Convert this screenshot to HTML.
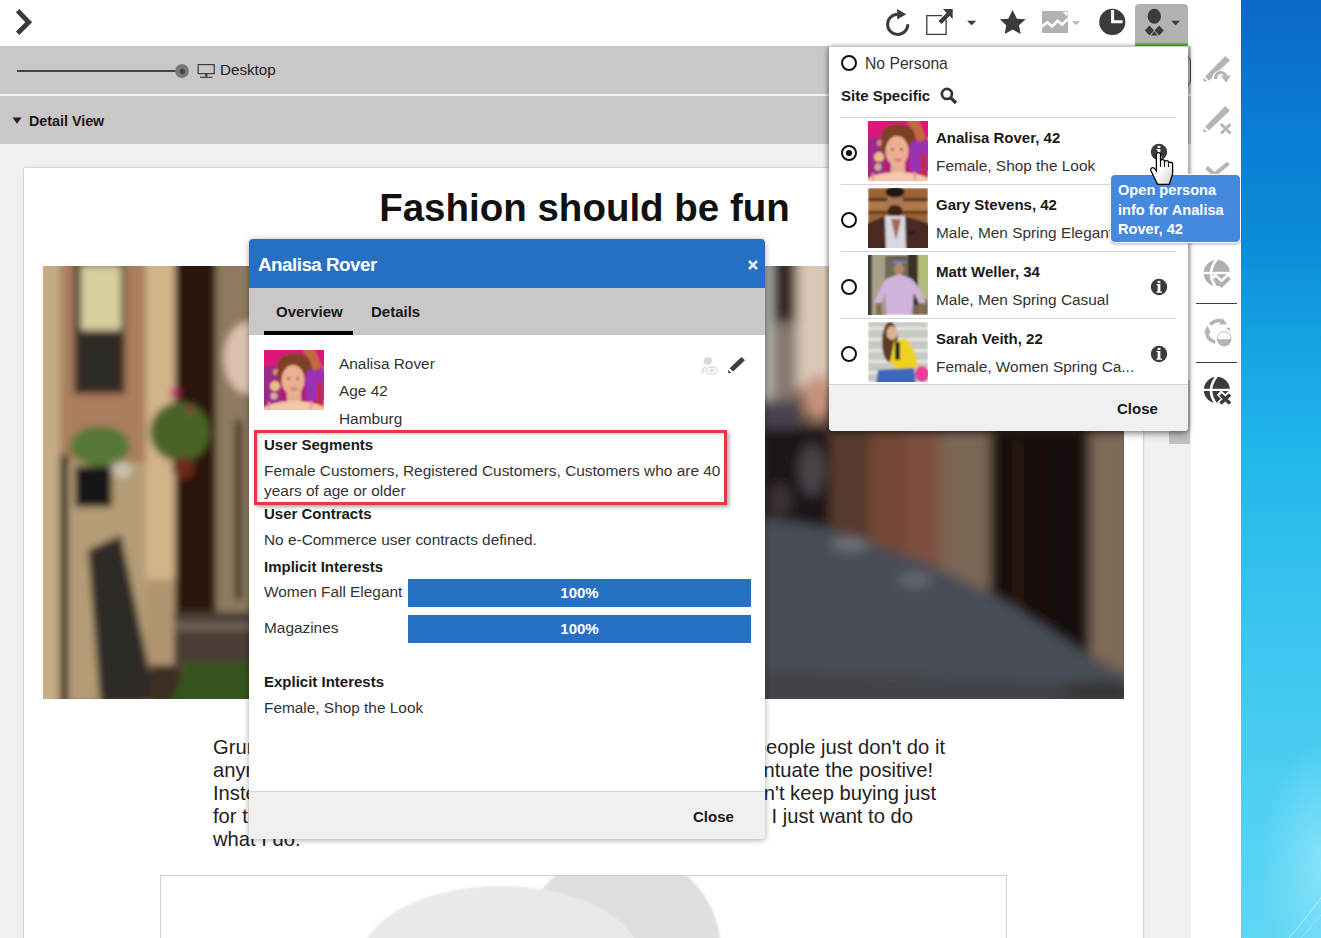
<!DOCTYPE html>
<html><head><meta charset="utf-8">
<style>
*{box-sizing:border-box;margin:0;padding:0}
html,body{width:1321px;height:938px;overflow:hidden;background:#fff;font-family:"Liberation Sans",sans-serif;color:#222}
.a{position:absolute}
#wall{left:1241px;top:0;width:80px;height:938px;background:radial-gradient(ellipse 60px 120px at 100% 92%,rgba(190,245,255,.45),rgba(190,245,255,0)),linear-gradient(180deg,#0b68c8 0%,#0a7cd2 13%,#0a8ad8 25%,#16a4e4 37%,#22b6ea 48%,#3cc6f0 68%,#55d2f4 90%,#60d6f5 100%)}
#topbar{left:0;top:0;width:1241px;height:46px;background:#fff}
#gbar1{left:0;top:46px;width:1191px;height:48px;background:#c9c7c8}
#gsep{left:0;top:94px;width:1191px;height:2px;background:#f4f4f4}
#gbar2{left:0;top:96px;width:1191px;height:48px;background:#c9c7c8}
#bg{left:0;top:144px;width:1191px;height:795px;background:#f0f0f0}
#side{left:1191px;top:46px;width:50px;height:892px;background:#fff}
#card{left:24px;top:168px;width:1119px;height:800px;background:#fff;box-shadow:0 0 2px rgba(0,0,0,.35)}
#title{left:25px;top:186px;width:1119px;text-align:center;font:bold 38.5px/44px "Liberation Sans",sans-serif;color:#111;padding-left:0}
#photo{left:43px;top:266px;width:1081px;height:433px;background:#6a5a4a;overflow:hidden}
.para{font:20.2px/23px "Liberation Sans",sans-serif;color:#222;white-space:nowrap}
#hatbox{left:160px;top:875px;width:847px;height:100px;border:1px solid #cfcfcf;background:#fff;overflow:hidden}
#thumb{left:1169px;top:380px;width:21px;height:64px;background:#c1c1c1}

#modal{left:249px;top:239px;width:516px;height:600px;background:#fff;border-radius:4px;box-shadow:0 1px 6px rgba(0,0,0,.35);overflow:hidden}
#mhead{left:0;top:0;width:516px;height:49px;background:#2670c4}
#mtitle{left:9px;top:15px;font:bold 18.8px/22px "Liberation Sans",sans-serif;letter-spacing:-0.5px;color:#fff}
#mtabs{left:0;top:49px;width:516px;height:47px;background:#c9c7c8}
.tab{font:bold 15px/18px "Liberation Sans",sans-serif;color:#1a1a1a}
#uline{left:15px;top:92px;width:89px;height:4px;background:#000}
.t15{font:15.4px/18px "Liberation Sans",sans-serif;color:#333;white-space:nowrap}
.b15{font:bold 15px/18px "Liberation Sans",sans-serif;color:#1a1a1a;white-space:nowrap}
#mfoot{left:0;top:552px;width:516px;height:48px;background:#f0f0f0;border-top:1px solid #d2d2d2}
.bar{background:#2670c4;color:#fff;font:bold 15px/28px "Liberation Sans",sans-serif;text-align:center}
#redbox{left:5px;top:191px;width:473px;height:75px;border:3px solid #e8393d;box-shadow:2px 2px 4px rgba(0,0,0,.35), inset 1px 1px 3px rgba(0,0,0,.25)}

#dd{left:829px;top:46px;width:359px;height:385px;background:#fff;border-top:1px solid #cfcfcf;border-radius:0 0 4px 4px;box-shadow:0 4px 6px rgba(0,0,0,.3), 2px 0 4px rgba(0,0,0,.2), -2px 0 4px rgba(0,0,0,.2);overflow:hidden}
.radio{width:16px;height:16px;border:2px solid #111;border-radius:50%}
.sep{height:1px;background:#d6d6d6;left:12px;width:335px}
.av{width:60px;height:60px}
.info{width:17px;height:17px;border-radius:50%;background:#3a3a3a}
#ddfoot{left:0;top:337px;width:359px;height:48px;background:#f0f0f0;border-top:1px solid #d4d4d4}
#tip{left:1110px;top:174px;width:131px;height:69px;background:#4489de;border:1px solid #fff;border-radius:5px;box-shadow:0 2px 2px rgba(0,0,0,.2);color:#fff;font:bold 14.6px/19.5px "Liberation Sans",sans-serif;padding:6px 0 0 7px;white-space:nowrap}
</style></head><body>
<svg width="0" height="0" style="position:absolute">
<defs>
 <filter id="bl" x="-5%" y="-5%" width="110%" height="110%"><feGaussianBlur stdDeviation="0.8"/></filter>
 <filter id="bl3" x="-2%" y="-5%" width="104%" height="110%"><feGaussianBlur stdDeviation="3.5"/></filter>
 <filter id="bl6" x="-5%" y="-5%" width="110%" height="110%"><feGaussianBlur stdDeviation="6"/></filter>
 <clipPath id="avc"><rect width="60" height="60"/></clipPath>
 <symbol id="av1" viewBox="0 0 60 60"><g clip-path="url(#avc)"><g filter="url(#bl)">
  <rect width="60" height="60" fill="#b01a7c"/>
  <rect x="-2" y="-2" width="64" height="18" fill="#de127a"/>
  <rect x="-2" y="16" width="18" height="46" fill="#9a2a86"/>
  <circle cx="11" cy="36" r="5" fill="#e8c088"/><circle cx="10" cy="46" r="3.5" fill="#d0b098"/><circle cx="12" cy="22" r="3" fill="#e09070"/>
  <rect x="42" y="20" width="20" height="30" fill="#9a30b4"/>
  <polygon points="38,-2 50,-2 58,18 50,21" fill="#c06a3c"/>
  <rect x="53" y="32" width="5" height="28" fill="#c42a30"/>
  <ellipse cx="30" cy="15" rx="17" ry="12" fill="#7c4028"/>
  <ellipse cx="18" cy="25" rx="5" ry="8" fill="#7c4028"/>
  <rect x="23" y="38" width="14" height="14" fill="#e6ae90"/>
  <ellipse cx="29" cy="30" rx="11.5" ry="15" fill="#eab090"/>
  <circle cx="24.5" cy="28.5" r="1.2" fill="#5a4a60"/><circle cx="33.5" cy="28.5" r="1.2" fill="#5a4a60"/>
  <ellipse cx="30" cy="39" rx="4" ry="1.8" fill="#e07a88"/>
  <ellipse cx="30" cy="63" rx="34" ry="12" fill="#f2c8a8"/>
  <rect x="4" y="52" width="2" height="9" fill="#f08aa8"/><rect x="46" y="51" width="2" height="9" fill="#f08aa8"/>
 </g></g></symbol>
 <symbol id="av2" viewBox="0 0 60 60"><g clip-path="url(#avc)"><g filter="url(#bl)">
  <rect width="60" height="60" fill="#9a6438"/>
  <rect y="10" width="60" height="3" fill="#5a3418"/><rect y="23" width="60" height="3" fill="#6a3c1c"/><rect y="36" width="60" height="2" fill="#6a3c1c"/>
  <rect y="14" width="60" height="8" fill="#b07a4a"/>
  <ellipse cx="27" cy="15" rx="8.5" ry="12.5" fill="#a87456"/>
  <ellipse cx="27" cy="4" rx="9.5" ry="5.5" fill="#24160e"/>
  <ellipse cx="27" cy="23" rx="7.5" ry="6" fill="#3a2418"/>
  <polygon points="-2,36 17,28 37,28 62,36 62,62 -2,62" fill="#4a2c24"/>
  <polygon points="17,28 37,28 38,62 18,62" fill="#dcd6de"/>
  <polygon points="23,31 33,31 28,52" fill="#a06a50"/>
  <polygon points="40,44 47,43 46,47 40,47" fill="#1a1a2a"/>
 </g></g></symbol>
 <symbol id="av3" viewBox="0 0 60 60"><g clip-path="url(#avc)"><g filter="url(#bl)">
  <rect width="60" height="60" fill="#6e6a52"/>
  <rect x="-2" y="-2" width="6" height="64" fill="#3e3a2e"/>
  <rect x="4" y="-2" width="13" height="64" fill="#a8a08a"/>
  <rect x="40" y="-2" width="10" height="52" fill="#3a3026"/>
  <rect x="50" y="-2" width="12" height="46" fill="#b4bc7c"/>
  <ellipse cx="31" cy="6" rx="8" ry="4.5" fill="#6a6048"/>
  <rect x="24" y="6" width="14" height="2.2" fill="#6888c8"/>
  <ellipse cx="31" cy="14" rx="5" ry="6.5" fill="#b08868"/>
  <polygon points="18,24 31,19 44,24 52,34 58,48 52,50 46,38 44,60 18,60 17,38 12,50 6,48 12,34" fill="#d0b4dc"/>
  <rect x="8" y="48" width="6" height="12" fill="#8a6a50"/><rect x="50" y="48" width="6" height="12" fill="#8a6a50"/>
 </g></g></symbol>
 <symbol id="av4" viewBox="0 0 60 60"><g clip-path="url(#avc)"><g filter="url(#bl)">
  <rect width="60" height="60" fill="#c8c8c4"/>
  <rect y="5" width="60" height="3" fill="#e6e6e2"/><rect y="16" width="60" height="3" fill="#e6e6e2"/><rect y="27" width="60" height="3" fill="#e6e6e2"/><rect y="38" width="60" height="3" fill="#e6e6e2"/><rect y="49" width="60" height="3" fill="#e6e6e2"/>
  <ellipse cx="22" cy="20" rx="8" ry="20" fill="#5a3a28"/>
  <ellipse cx="24" cy="11" rx="5.5" ry="7" fill="#e0b090"/>
  <polygon points="26,20 38,16 46,28 50,44 44,50 30,48 22,40" fill="#f0d020"/>
  <rect x="27" y="20" width="5" height="18" fill="#222"/>
  <polygon points="10,48 46,46 48,62 8,62" fill="#3a68b8"/>
  <ellipse cx="54" cy="52" rx="7" ry="8" fill="#e83c98"/>
 </g></g></symbol>
 <symbol id="infoi" viewBox="0 0 18 18"><circle cx="9" cy="9" r="8.2" fill="#3d3a3b"/><rect x="7.6" y="2.9" width="2.8" height="2" fill="#fff"/><path d="M6.5 5.9 H10.4 V13.5 H12 V14.8 H6.4 V13.5 H7.6 V7.1 H6.5 Z" fill="#fff"/></symbol>
</defs></svg>
<div class="a" id="wall"><svg width="80" height="938" style="position:absolute;left:0;top:0"><path d="M48 938 Q70 912 82 895" fill="none" stroke="rgba(255,255,255,.45)" stroke-width="1"/><path d="M60 938 Q75 922 82 912" fill="none" stroke="rgba(255,255,255,.25)" stroke-width="1"/></svg></div>
<div class="a" id="topbar"></div>
<div class="a" id="gbar1"></div>
<div class="a" id="gsep"></div>
<div class="a" style="left:1100px;top:56px;width:91px;height:30px;border:1.4px solid #444;border-radius:5px"></div>
<div class="a" id="gbar2"></div>
<div class="a" id="bg"></div>
<div class="a" id="thumb"></div>
<div class="a" id="side"></div>
<svg class="a" style="left:0;top:0" width="1241" height="46" viewBox="0 0 1241 46">
 <polygon points="15.9,12.2 19.3,9 32.1,22.2 19.3,35 15.9,31.6 25.3,22.2" fill="#3d3a3a"/>
 <path d="M907.8 24.2 A10.1 10.1 0 1 1 897.6 14.2" fill="none" stroke="#3d3a3a" stroke-width="3"/>
 <polygon points="897.1,9 906.2,14.2 897.1,19.4" fill="#3d3a3a"/>
 <path d="M942 15.6 H926.8 V34.3 H946.1 V19.5" fill="none" stroke="#3d3a3a" stroke-width="1.3"/>
 <path d="M940 22.5 L948.5 14" stroke="#3d3a3a" stroke-width="4.2"/>
 <polygon points="943,9 952.7,9 952.7,19" fill="#3d3a3a"/>
 <polygon points="967,20.8 976.3,20.8 971.6,25.3" fill="#3d3a3a"/>
 <polygon points="1012.6,10 1016.9,18.8 1025.6,19.3 1019,25.3 1020.7,34 1012.6,29.6 1004.8,34 1006.2,25.3 999.8,19.3 1008.3,18.8" fill="#3d3a3a"/>
 <rect x="1042" y="11" width="26" height="22" fill="#b1b1b1"/>
 <polyline points="1041,27 1047.5,22.5 1052,26.5 1057.5,20.8 1062,24.5 1069,18" fill="none" stroke="#fff" stroke-width="2.6"/>
 <polygon points="1062.3,11.8 1067.5,11.8 1067.5,16.5" fill="#fff"/>
 <polygon points="1072.1,21.2 1080.1,21.2 1076.1,25.1" fill="#b1b1b1"/>
 <circle cx="1112.3" cy="21.9" r="13.1" fill="#3d3a3a"/>
 <path d="M1112.6 9.9 V21.8 H1122.6" fill="none" stroke="#fff" stroke-width="3.1"/>
 <path d="M1135 43.5 V8 Q1135 4 1139 4 H1184 Q1188 4 1188 8 V43.5 Z" fill="#b3b1b2"/>
 <rect x="1135" y="43.3" width="53" height="2.7" fill="#5aae3c"/>
 <ellipse cx="1154.3" cy="16.3" rx="6.7" ry="7.5" fill="#3d3a3a"/>
 <polygon points="1144.8,30.6 1149.4,25.6 1154,30.6 1149.4,35.4" fill="#3d3a3a"/>
 <polygon points="1154.6,30.6 1159.2,25.6 1163.8,30.6 1159.2,35.4" fill="#3d3a3a"/>
 <polygon points="1151,35.6 1154.3,31.2 1157.6,35.6" fill="#3d3a3a"/>
 <polygon points="1171.1,20.8 1180.2,20.8 1175.6,25.3" fill="#3d3a3a"/>
</svg>
<svg class="a" style="left:0;top:46px" width="300" height="50" viewBox="0 46 300 50">
 <rect x="17" y="70" width="160" height="2" fill="#404548"/>
 <circle cx="182" cy="71" r="6.9" fill="#7a7776"/>
 <circle cx="182.4" cy="71.4" r="2.6" fill="#404548"/>
 <rect x="198.2" y="64.6" width="16" height="9" fill="none" stroke="#3a3f42" stroke-width="1.2"/>
 <rect x="205.2" y="73.8" width="2.2" height="3" fill="#3a3f42"/>
 <rect x="200" y="76.7" width="12.5" height="1.2" fill="#3a3f42"/>
</svg>
<div class="a t15" style="left:220px;top:61px;color:#222;font-size:15.2px">Desktop</div>
<svg class="a" style="left:12px;top:117px" width="10" height="7" viewBox="0 0 10 7"><polygon points="0.5,0.6 9.6,0.6 5,6.8" fill="#222"/></svg>
<div class="a" style="left:29px;top:113px;font:bold 14.3px/16px 'Liberation Sans',sans-serif;color:#1a1a1a">Detail View</div>
<svg class="a" style="left:1191px;top:46px" width="50" height="370" viewBox="1191 46 50 370">
 <g fill="#b5b5b5">
  <polygon points="1225.2,56 1230,60.2 1209,80.7 1205.1,76.4"/>
  <polygon points="1203.5,77.8 1203.5,81.6 1207.3,81.6"/>
  <polygon points="1225.2,106 1230,110.4 1209,130.5 1205.1,126.7"/>
  <polygon points="1203.5,128.1 1203.5,132 1207.3,132"/>
 </g>
 <path d="M1215.5 79.5 A5.6 5.6 0 0 1 1226 76.5" fill="none" stroke="#fff" stroke-width="7"/>
 <path d="M1215.7 79 A5.3 5.3 0 0 1 1226 76.5" fill="none" stroke="#b5b5b5" stroke-width="3.2"/>
 <polygon points="1220.8,75.5 1231.2,75.5 1226,82.6" fill="#b5b5b5"/>
 <path d="M1221 124 L1230.5 133.5 M1230.5 124 L1221 133.5" stroke="#fff" stroke-width="6"/>
 <path d="M1221 124 L1230.5 133.5 M1230.5 124 L1221 133.5" stroke="#b5b5b5" stroke-width="3"/>
 <polyline points="1206.5,167.5 1214.4,174.8 1228.5,163" fill="none" stroke="#b5b5b5" stroke-width="4.2"/>
 <circle cx="1216.8" cy="272.9" r="13.1" fill="#b0b0b0"/>
 <path d="M1203 273 H1231" stroke="#fff" stroke-width="2.4"/>
 <path d="M1217 259 Q1205.5 272.9 1216 287" fill="none" stroke="#fff" stroke-width="2.6"/>
 <polyline points="1213.5,275 1221.6,282.5 1230.5,274" fill="none" stroke="#fff" stroke-width="5"/>
 <polyline points="1214.5,278.5 1221.6,285.2 1229.5,277.5" fill="none" stroke="#b0b0b0" stroke-width="4"/>
 <rect x="1196" y="303" width="41" height="1" fill="#3c3c3c"/>
 <g fill="#b3b3b3">
  <path d="M1210.2 324.8 Q1214 320 1221 320.5" fill="none" stroke="#b3b3b3" stroke-width="3.4"/>
  <polygon points="1222.4,318 1227.3,324.6 1219.2,324.6"/>
  <path d="M1215.2 342.3 Q1207.5 340 1206.8 332.5" fill="none" stroke="#b3b3b3" stroke-width="3.4"/>
  <polygon points="1207.5,325.6 1203.9,333.3 1210.9,333.3"/>
  <polygon points="1225.9,327.8 1230.1,327.8 1230.1,331.2"/>
  <path d="M1217.1 339.3 H1231.3 A7.1 7.1 0 0 1 1217.1 339.3 Z"/>
 </g>
 <circle cx="1224.2" cy="338.4" r="6.8" fill="none" stroke="#b3b3b3" stroke-width="0.9"/>
 <rect x="1196" y="362" width="41" height="1" fill="#3c3c3c"/>
 <circle cx="1216.9" cy="389.9" r="13.1" fill="#3c3a3b"/>
 <path d="M1203 389.9 H1231" stroke="#fff" stroke-width="2.2"/>
 <path d="M1217 376 Q1205.5 389.9 1216 404" fill="none" stroke="#fff" stroke-width="2.6"/>
 <path d="M1219 392.5 L1231.5 405 M1231.5 392.5 L1219 405" stroke="#fff" stroke-width="6.5"/>
 <path d="M1220.5 394.5 L1230 403.5 M1230 394.5 L1220.5 403.5" stroke="#3c3a3b" stroke-width="3.6"/>
</svg>

<div class="a" id="card"></div>
<div class="a" id="title">Fashion should be fun</div>
<div class="a" id="photo"><svg width="1081" height="433" viewBox="43 266 1081 433"><g filter="url(#bl3)">
 <rect x="30" y="250" width="1110" height="460" fill="#5a4a3c"/>
 <!-- left strip -->
 <rect x="30" y="250" width="31" height="460" fill="#c4ac84"/>
 <rect x="60" y="250" width="86" height="215" fill="#aa7e5e"/>
 <rect x="60" y="455" width="8" height="250" fill="#1e1812"/>
 <rect x="68" y="462" width="84" height="240" fill="#b49c76"/>
 <rect x="74" y="262" width="51" height="132" fill="#3a2a20"/>
 <rect x="81" y="266" width="40" height="64" fill="#d8cfa0"/>
 <rect x="81" y="333" width="40" height="56" fill="#2e2926"/>
 <ellipse cx="100" cy="446" rx="30" ry="20" fill="#587834"/>
 <rect x="75" y="466" width="37" height="41" fill="#161412"/>
 <ellipse cx="122" cy="470" rx="10" ry="8" fill="#c8c0b0"/>
 <rect x="146" y="560" width="30" height="150" fill="#b09470"/>
 <polygon points="88,550 121,535 156,702 100,702" fill="#2e2a26"/>
 <rect x="146" y="250" width="30" height="330" fill="#d2b48a"/>
 <rect x="175" y="250" width="42" height="370" fill="#2a120c"/>
 <rect x="216" y="250" width="40" height="370" fill="#8e7a5e"/>
 <rect x="235" y="420" width="7" height="180" fill="#3a3026"/>
 <ellipse cx="232" cy="675" rx="0" ry="0" fill="none"/>
 <rect x="174" y="612" width="82" height="52" fill="#4a3c34"/>
 <rect x="174" y="622" width="82" height="9" fill="#6e6054"/>
 <ellipse cx="180" cy="432" rx="30" ry="30" fill="#4a6428"/>
 <circle cx="175" cy="393" r="5" fill="#b81a68"/>
 <circle cx="190" cy="410" r="3.5" fill="#9a2a40"/>
 <circle cx="183" cy="468" r="11" fill="#6e2a1a"/>
 <rect x="150" y="665" width="30" height="40" fill="#3a2e22"/>
 <polygon points="186,662 256,662 256,706 170,706" fill="#34521f"/>
 <ellipse cx="248" cy="358" rx="24" ry="36" fill="#dcc0b0"/>
 </g><g filter="url(#bl6)">
 <!-- right top strip -->
 <rect x="760" y="250" width="13" height="160" fill="#b6bcb2"/>
 <rect x="772" y="250" width="26" height="80" fill="#30241e"/>
 <rect x="772" y="322" width="25" height="80" fill="#867670"/>
 <rect x="797" y="250" width="40" height="140" fill="#dac8b6"/>
 <ellipse cx="818" cy="398" rx="16" ry="22" fill="#c4917a"/>
 <rect x="760" y="400" width="38" height="35" fill="#4a4250"/>
 <!-- right bottom -->
 <rect x="760" y="428" width="72" height="110" fill="#1e1612"/>
 <ellipse cx="812" cy="470" rx="13" ry="26" fill="#4a424a"/>
 <ellipse cx="780" cy="500" rx="12" ry="16" fill="#3a3234"/>
 <rect x="830" y="430" width="40" height="130" fill="#563a2e"/>
 <rect x="870" y="430" width="35" height="140" fill="#744634"/>
 <rect x="905" y="430" width="35" height="150" fill="#7e5040"/>
 <rect x="940" y="430" width="52" height="170" fill="#7a6654"/>
 <rect x="990" y="430" width="102" height="230" fill="#120c0a"/>
 <rect x="1015" y="440" width="6" height="180" fill="#341c18"/>
 <rect x="1040" y="440" width="5" height="190" fill="#28140f"/>
 <rect x="1090" y="430" width="40" height="260" fill="#7e6a58"/>
 <polygon points="750,516 830,528 926,562 1000,598 1089,655 1130,676 1130,710 750,710" fill="#4a4d56"/>
 <ellipse cx="850" cy="544" rx="18" ry="6" fill="#76767c"/>
 <ellipse cx="915" cy="580" rx="16" ry="6" fill="#6c6c72"/>
 <polygon points="760,670 1130,685 1130,710 760,710" fill="#434249"/>
 <ellipse cx="1100" cy="690" rx="40" ry="8" fill="#35302f"/>
</g></svg></div>
<div class="a para" style="left:213px;top:736px">Grumpy</div>
<div class="a para" style="left:213px;top:759px">anymore</div>
<div class="a para" style="left:213px;top:782px">Instead</div>
<div class="a para" style="left:213px;top:805px">for the</div>
<div class="a para" style="left:213px;top:828px">what I do.</div>
<div class="a para" style="right:376px;top:736px">people just don't do it</div>
<div class="a para" style="right:388px;top:759px">accentuate the positive!</div>
<div class="a para" style="right:385px;top:782px">don't keep buying just</div>
<div class="a para" style="right:408px;top:805px">I just want to do</div>
<div class="a" id="hatbox"><svg width="847" height="63" viewBox="160 875 847 63">
 <defs><filter id="hb"><feGaussianBlur stdDeviation="1.2"/></filter></defs>
 <g filter="url(#hb)">
 <ellipse cx="620" cy="950" rx="100" ry="100" fill="#dfdddd"/>
 <ellipse cx="500" cy="960" rx="140" ry="75" fill="#eae8ea"/>
 </g>
</svg></div>

<div class="a" id="modal">
 <div class="a" id="mhead"><div class="a" id="mtitle">Analisa Rover</div>
  <svg class="a" style="left:499px;top:21px" width="10" height="10" viewBox="0 0 10 10"><path d="M1 1L9 9M9 1L1 9" stroke="#e4ecf6" stroke-width="2.6"/></svg>
 </div>
 <div class="a" id="mtabs"><div class="a tab" style="left:27px;top:64px"></div></div>
 <div class="a tab" style="left:27px;top:64px">Overview</div>
 <div class="a tab" style="left:122px;top:64px">Details</div>
 <div class="a" id="uline"></div>
 <svg class="a" style="left:15px;top:111px" width="60" height="60"><use href="#av1"/></svg>
 <div class="a t15" style="left:90px;top:116px">Analisa Rover</div>
 <div class="a t15" style="left:90px;top:143px">Age 42</div>
 <div class="a t15" style="left:90px;top:171px">Hamburg</div>
 
 <svg class="a" style="left:450px;top:115px" width="50" height="22" viewBox="699 354 50 22">
  <circle cx="707.9" cy="361" r="4.1" fill="#d8dada"/>
  <path d="M702.3 373.5 Q702.5 368.5 705.8 366.5" fill="none" stroke="#d8dada" stroke-width="1.8"/>
  <ellipse cx="711.7" cy="370.6" rx="5.6" ry="3.6" fill="none" stroke="#d8dada" stroke-width="1.3"/>
  <circle cx="711.7" cy="370.6" r="1.8" fill="#d8dada"/>
  <polygon points="741.4,356.9 745,360.2 733.1,371.6 729.6,368.3" fill="#3a3f40"/>
  <polygon points="728.1,370 728.1,372.9 731.3,372.9" fill="#3a3f40"/>
 </svg>
 <div class="a" id="redbox"></div>
 <div class="a b15" style="left:15px;top:197px">User Segments</div>
 <div class="a t15" style="left:15px;top:223px;font-size:15.45px">Female Customers, Registered Customers, Customers who are 40</div>
 <div class="a t15" style="left:15px;top:243px;font-size:15.45px">years of age or older</div>
 <div class="a b15" style="left:15px;top:266px">User Contracts</div>
 <div class="a t15" style="left:15px;top:292px">No e-Commerce user contracts defined.</div>
 <div class="a b15" style="left:15px;top:319px">Implicit Interests</div>
 <div class="a t15" style="left:15px;top:344px">Women Fall Elegant</div>
 <div class="a bar" style="left:159px;top:340px;width:343px;height:28px">100%</div>
 <div class="a t15" style="left:15px;top:380px">Magazines</div>
 <div class="a bar" style="left:159px;top:376px;width:343px;height:28px">100%</div>
 <div class="a b15" style="left:15px;top:434px">Explicit Interests</div>
 <div class="a t15" style="left:15px;top:460px">Female, Shop the Look</div>
 <div class="a" id="mfoot"><div class="a b15" style="left:444px;top:16px">Close</div></div>
</div>

<div class="a" id="dd">
 <div class="a radio" style="left:12px;top:8px"></div>
 <div class="a t15" style="left:36px;top:8px;color:#333;font-size:15.7px">No Persona</div>
 <div class="a b15" style="left:12px;top:40px">Site Specific</div>
 <svg class="a" style="left:111px;top:40px" width="18" height="18" viewBox="0 0 18 18"><circle cx="6.9" cy="6.9" r="5" fill="none" stroke="#333" stroke-width="2.7"/><path d="M10.6 10.6L16 16" stroke="#333" stroke-width="3.4"/></svg>
 <div class="a sep" style="top:70px"></div>
 <div class="a radio" style="left:12px;top:98px"></div>
 <div class="a" style="left:17.2px;top:103.2px;width:5.6px;height:5.6px;border-radius:50%;background:#111"></div>
 <svg class="a" style="left:39px;top:74px" width="60" height="60"><use href="#av1"/></svg>
 <div class="a b15" style="left:107px;top:82px">Analisa Rover, 42</div>
 <div class="a t15" style="left:107px;top:110px;color:#333">Female, Shop the Look</div>
 <svg class="a" style="left:321px;top:96px" width="18" height="18"><use href="#infoi"/></svg>
 <div class="a sep" style="top:137px"></div>
 <div class="a radio" style="left:12px;top:165px"></div>
 <svg class="a" style="left:39px;top:141px" width="60" height="60"><use href="#av2"/></svg>
 <div class="a b15" style="left:107px;top:149px">Gary Stevens, 42</div>
 <div class="a t15" style="left:107px;top:177px;color:#333">Male, Men Spring Elegant</div>
 <svg class="a" style="left:321px;top:164px" width="18" height="18"><use href="#infoi"/></svg>
 <div class="a sep" style="top:204px"></div>
 <div class="a radio" style="left:12px;top:232px"></div>
 <svg class="a" style="left:39px;top:208px" width="60" height="60"><use href="#av3"/></svg>
 <div class="a b15" style="left:107px;top:216px">Matt Weller, 34</div>
 <div class="a t15" style="left:107px;top:244px;color:#333">Male, Men Spring Casual</div>
 <svg class="a" style="left:321px;top:231px" width="18" height="18"><use href="#infoi"/></svg>
 <div class="a sep" style="top:271px"></div>
 <div class="a radio" style="left:12px;top:299px"></div>
 <svg class="a" style="left:39px;top:275px" width="60" height="60"><use href="#av4"/></svg>
 <div class="a b15" style="left:107px;top:283px">Sarah Veith, 22</div>
 <div class="a t15" style="left:107px;top:311px;color:#333">Female, Women Spring Ca...</div>
 <svg class="a" style="left:321px;top:298px" width="18" height="18"><use href="#infoi"/></svg>
 <div class="a" id="ddfoot"><div class="a b15" style="left:288px;top:15px">Close</div></div>
</div>
<div class="a" id="tip">Open persona<br>info for Analisa<br>Rover, 42</div>
<svg class="a" style="left:1149px;top:151px" width="26" height="36" viewBox="-1 -1 26 36">
 <defs><linearGradient id="hg" x1="0" y1="0" x2="1" y2="1"><stop offset="0.5" stop-color="#fff"/><stop offset="1" stop-color="#cfcfcf"/></linearGradient></defs>
 <path d="M6.4,2.2 C6.4,0 10.5,0 10.5,2.2 L10.5,9 C10.5,7.2 14.5,7.2 14.5,9 L14.5,10 C14.5,8.2 18.5,8.2 18.5,10 L18.5,11.5 C18.5,9.8 22.6,9.8 22.6,11.8 L22.6,22 L19.3,32.3 L7.6,32.3 L0.9,18.8 C0,16.6 2.6,14.6 4.3,16.4 L6.4,19 Z" fill="url(#hg)" stroke="#000" stroke-width="1.3"/>
 <path d="M10.5 9 V15 M14.5 10 V15 M18.5 11.5 V15" stroke="#000" stroke-width="1.1"/>
</svg>
</body></html>
